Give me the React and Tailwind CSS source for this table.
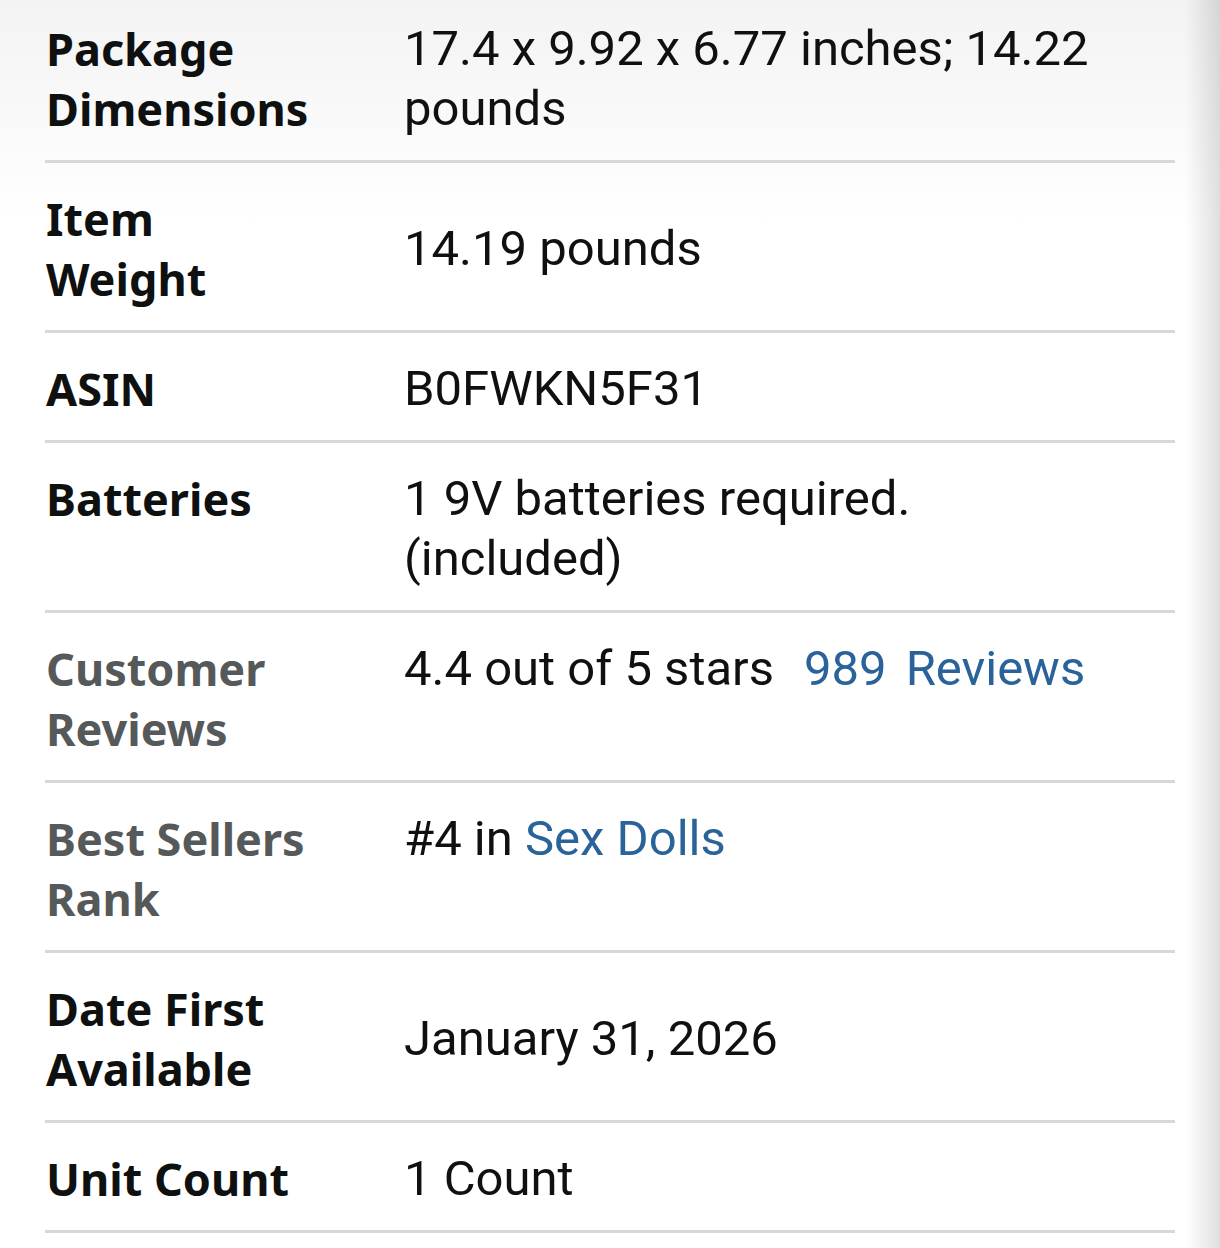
import React from 'react';

const labelFont = { fontFamily: '"Noto Sans", "Open Sans", sans-serif' };
const valueFont = { fontFamily: 'Roboto, "Noto Sans", sans-serif' };

const rows = [
  {
    label: ['Package', 'Dimensions'],
    value: (
      <>
        17.4 x 9.92 x 6.77 inches; 14.22
        <br />
        pounds
      </>
    ),
    align: 'items-start',
  },
  { label: ['Item', 'Weight'], value: '14.19 pounds', align: 'items-center' },
  { label: ['ASIN'], value: 'B0FWKN5F31', align: 'items-start' },
  {
    label: ['Batteries'],
    value: (
      <>
        1 9V batteries required.
        <br />
        (included)
      </>
    ),
    align: 'items-start',
  },
  {
    label: ['Customer', 'Reviews'],
    muted: true,
    value: (
      <>
        4.4 out of 5 stars
        <span className="ml-[30px] text-[#2a6399]">989</span>
        <span className="ml-[19px] text-[#2a6399]">Reviews</span>
      </>
    ),
    align: 'items-start',
  },
  {
    label: ['Best Sellers', 'Rank'],
    muted: true,
    value: (
      <>
        #4 in <span className="text-[#2a6399]">Sex Dolls</span>
      </>
    ),
    align: 'items-start',
  },
  { label: ['Date First', 'Available'], value: 'January 31, 2026', align: 'items-center' },
  { label: ['Unit Count'], value: '1 Count', align: 'items-start' },
];

function DetailRow({ label, value, muted, align }) {
  return (
    <div className={`flex ${align} pt-[26px] pb-[21px] border-b-[3px] border-[#d5d9d9]`}>
      <div
        style={labelFont}
        className={`w-[359px] pl-[1px] shrink-0 text-[45px] leading-[60px] font-bold ${
          muted ? 'text-[#565959]' : 'text-[#0f1111]'
        }`}
      >
        {label.map((l) => (
          <div key={l}>{l}</div>
        ))}
      </div>
      <div style={valueFont} className="text-[49px] leading-[60px] text-[#0f1111]">
        {value}
      </div>
    </div>
  );
}

export default function App() {
  return (
    <div className="flex w-[1220px] h-[1248px] overflow-hidden bg-linear-to-b from-[#f3f3f3] to-white to-[18%]">
      <div className="w-[1175px] pl-[45px]">
        <div className="-mt-[7px]">
          {rows.map((r, i) => (
            <DetailRow key={i} {...r} />
          ))}
        </div>
      </div>
      <div className="w-[45px] bg-linear-to-r from-transparent from-[22%] to-[#00000020]" />
    </div>
  );
}
